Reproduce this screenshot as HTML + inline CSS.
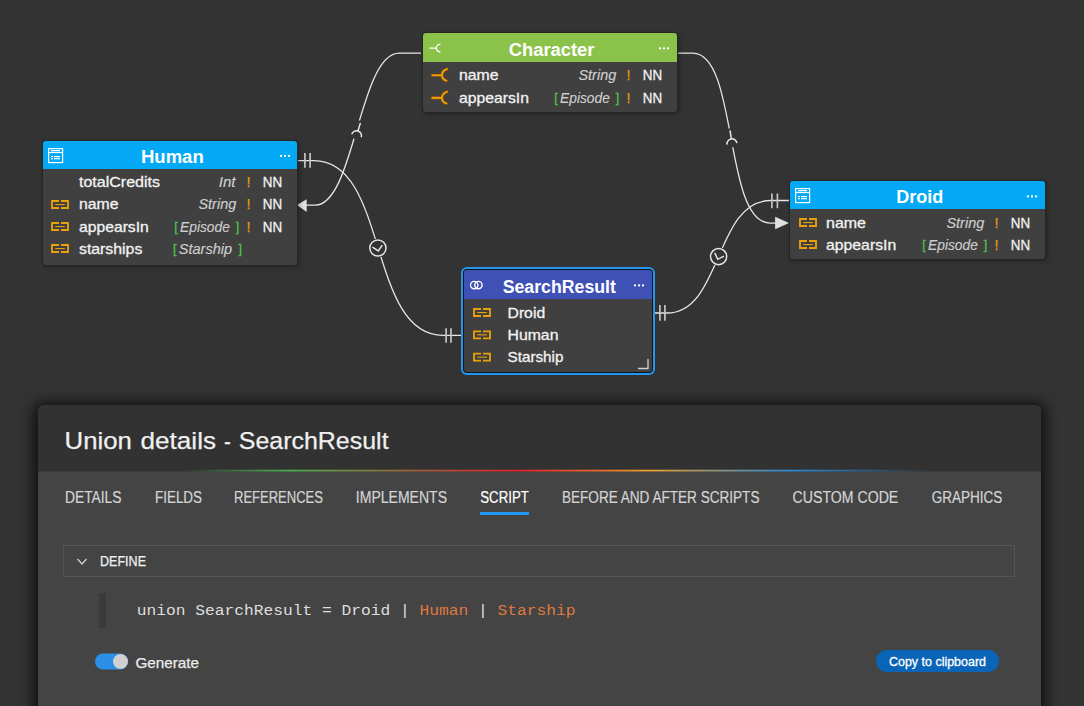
<!DOCTYPE html>
<html><head><meta charset="utf-8"><style>
html,body{margin:0;padding:0;background:#333333;width:1084px;height:706px;overflow:hidden}
svg{display:block;font-family:"Liberation Sans",sans-serif}
</style></head><body>
<svg width="1084" height="706" viewBox="0 0 1084 706">
<defs><filter id="bs" x="-10%" y="-10%" width="120%" height="130%"><feGaussianBlur stdDeviation="2.5"/></filter></defs>
<rect width="1084" height="706" fill="#333333"/>
<path d="M421 53.2H399.2C359.1 53.2 354.4 205.1 315.2 205.1H306" fill="none" stroke="#e6e6e6" stroke-width="1.3"/><path d="M678 53.1H692.8C738.3 53.1 723.5 223.1 770.2 223.1H776" fill="none" stroke="#e6e6e6" stroke-width="1.3"/><path d="M297 160.6H314C388.5 160.6 367.6 335.4 443 335.4H461" fill="none" stroke="#e6e6e6" stroke-width="1.3"/><path d="M655 313H667C721.9 313 714.9 200.5 770.6 200.5H790" fill="none" stroke="#e6e6e6" stroke-width="1.3"/><path d="M297 205.1L306.7 199.2V212.1Z" fill="#e0e0e0"/><path d="M789 223.1L775.1 216.8V229.3Z" fill="#e0e0e0"/><path d="M304.9 152.9V167.7M310.1 152.9V167.7" stroke="#c4c4c4" stroke-width="1.7"/><path d="M446.1 328.2V342.8M451 328.2V342.8" stroke="#c4c4c4" stroke-width="1.7"/><path d="M659.9 305V320.8M664.9 305V320.8" stroke="#c4c4c4" stroke-width="1.7"/><path d="M771.9 193.4V208.2M777.4 193.4V208.2" stroke="#c4c4c4" stroke-width="1.7"/><circle cx="377.9" cy="248" r="9.5" fill="#333333"/><circle cx="377.9" cy="248" r="8.1" fill="#333333" stroke="#e6e6e6" stroke-width="1.5"/><path d="M372.4 247.2L378.3 251L382.2 245.1" fill="none" stroke="#e6e6e6" stroke-width="1.5"/><circle cx="718.6" cy="256.6" r="9.5" fill="#333333"/><circle cx="718.6" cy="256.6" r="8.1" fill="#333333" stroke="#e6e6e6" stroke-width="1.5"/><path d="M714.8 252.9L717.7 259.3L724 256.2" fill="none" stroke="#e6e6e6" stroke-width="1.5"/><g transform="translate(358.1 130.5) rotate(17)"><rect x="-7" y="-10" width="14" height="19" fill="#333333"/><path d="M0 -8V0M-5 5.5A5 5 0 0 1 5 5.5" fill="none" stroke="#e6e6e6" stroke-width="1.5"/></g><g transform="translate(731.2 138.4) rotate(-8)"><rect x="-7" y="-10" width="14" height="19" fill="#333333"/><path d="M0 -8V0M-5 5.5A5 5 0 0 1 5 5.5" fill="none" stroke="#e6e6e6" stroke-width="1.5"/></g><rect x="424" y="34" width="255" height="80" rx="4" fill="#000" opacity="0.35" filter="url(#bs)"/><rect x="422" y="32" width="256" height="81" rx="4" fill="#262626"/><rect x="423" y="33" width="254" height="79" rx="3" fill="#404040"/><path d="M423 62V36Q423 33 426 33H674Q677 33 677 36V62Z" fill="#8bc34a"/><g fill="none" stroke="#ffffff" stroke-width="1.3" stroke-linecap="round"><path d="M429.8 48.1H436"/><path d="M440 44.4A3.7 3.7 0 0 0 440 51.800000000000004"/></g><circle cx="660" cy="48.4" r="1.15" fill="#ffffff"/><circle cx="664" cy="48.4" r="1.15" fill="#ffffff"/><circle cx="668" cy="48.4" r="1.15" fill="#ffffff"/><path d="M432.3 75.2H441.8M447.1 69.10000000000001C443.8 70.2 442 72.60000000000001 442 75.2C442 77.7 443.5 79.8 446.4 80.7" fill="none" stroke="#c86800" stroke-width="2.6" stroke-linecap="round"/><path d="M432.3 75.2H441.8M447.1 69.10000000000001C443.8 70.2 442 72.60000000000001 442 75.2C442 77.7 443.5 79.8 446.4 80.7" fill="none" stroke="#f2b600" stroke-width="1.1" stroke-linecap="round"/><path d="M432.3 97.9H441.8M447.1 91.80000000000001C443.8 92.9 442 95.30000000000001 442 97.9C442 100.4 443.5 102.5 446.4 103.4" fill="none" stroke="#c86800" stroke-width="2.6" stroke-linecap="round"/><path d="M432.3 97.9H441.8M447.1 91.80000000000001C443.8 92.9 442 95.30000000000001 442 97.9C442 100.4 443.5 102.5 446.4 103.4" fill="none" stroke="#f2b600" stroke-width="1.1" stroke-linecap="round"/><rect x="44" y="142" width="255" height="125" rx="4" fill="#000" opacity="0.35" filter="url(#bs)"/><rect x="42" y="140" width="256" height="126" rx="4" fill="#262626"/><rect x="43" y="141" width="254" height="124" rx="3" fill="#404040"/><path d="M43 169V144Q43 141 46 141H294Q297 141 297 144V169Z" fill="#03a9f4"/><g fill="none" stroke="#ffffff" stroke-width="1.2"><rect x="48.6" y="148.6" width="14" height="14"/><path d="M48.6 152.5H62.6"/></g><g fill="#ffffff"><rect x="51" y="150" width="9" height="1.2"/><rect x="51" y="156" width="2" height="1.2"/><rect x="54" y="156" width="6" height="1.2"/><rect x="51" y="158.1" width="2" height="1.2"/><rect x="54" y="158.1" width="6" height="1.2"/></g><circle cx="281" cy="155.9" r="1.15" fill="#ffffff"/><circle cx="285" cy="155.9" r="1.15" fill="#ffffff"/><circle cx="289" cy="155.9" r="1.15" fill="#ffffff"/><g fill="none" stroke="#eaa00a" stroke-width="1.85"><path d="M59 201H52V208H59"/><path d="M61 201H68V208H61"/></g><rect x="55.2" y="204" width="9.6" height="1.1" fill="#eaa00a"/><g fill="none" stroke="#eaa00a" stroke-width="1.85"><path d="M59 223H52V230H59"/><path d="M61 223H68V230H61"/></g><rect x="55.2" y="226" width="9.6" height="1.1" fill="#eaa00a"/><g fill="none" stroke="#eaa00a" stroke-width="1.85"><path d="M59 245H52V252H59"/><path d="M61 245H68V252H61"/></g><rect x="55.2" y="248" width="9.6" height="1.1" fill="#eaa00a"/><rect x="791" y="182" width="256" height="79" rx="4" fill="#000" opacity="0.35" filter="url(#bs)"/><rect x="789" y="180" width="257" height="80" rx="4" fill="#262626"/><rect x="790" y="181" width="255" height="78" rx="3" fill="#404040"/><path d="M790 209V184Q790 181 793 181H1042Q1045 181 1045 184V209Z" fill="#03a9f4"/><g fill="none" stroke="#ffffff" stroke-width="1.2"><rect x="795.6" y="188.6" width="14" height="14"/><path d="M795.6 192.5H809.6"/></g><g fill="#ffffff"><rect x="798" y="190" width="9" height="1.2"/><rect x="798" y="196" width="2" height="1.2"/><rect x="801" y="196" width="6" height="1.2"/><rect x="798" y="198.1" width="2" height="1.2"/><rect x="801" y="198.1" width="6" height="1.2"/></g><circle cx="1028" cy="196.4" r="1.15" fill="#ffffff"/><circle cx="1032" cy="196.4" r="1.15" fill="#ffffff"/><circle cx="1036" cy="196.4" r="1.15" fill="#ffffff"/><g fill="none" stroke="#eaa00a" stroke-width="1.85"><path d="M807 219H800V226H807"/><path d="M809 219H816V226H809"/></g><rect x="803.2" y="222" width="9.6" height="1.1" fill="#eaa00a"/><g fill="none" stroke="#eaa00a" stroke-width="1.85"><path d="M807 241H800V248H807"/><path d="M809 241H816V248H809"/></g><rect x="803.2" y="244" width="9.6" height="1.1" fill="#eaa00a"/><rect x="461" y="267" width="194" height="108" rx="6" fill="#2196f3"/><rect x="463" y="269" width="190" height="104" rx="4" fill="#141414"/><rect x="464" y="270" width="188" height="102" rx="3" fill="#404040"/><path d="M464 299V273Q464 270 467 270H649Q652 270 652 273V299Z" fill="#3f51b5"/><g fill="none" stroke="#ffffff" stroke-width="1.4"><circle cx="474.2" cy="285.1" r="3.7"/><circle cx="478.4" cy="285.1" r="3.7"/></g><circle cx="635" cy="285.4" r="1.15" fill="#ffffff"/><circle cx="639" cy="285.4" r="1.15" fill="#ffffff"/><circle cx="643" cy="285.4" r="1.15" fill="#ffffff"/><g fill="none" stroke="#eaa00a" stroke-width="1.85"><path d="M481 309.0H474V316.0H481"/><path d="M483 309.0H490V316.0H483"/></g><rect x="477.2" y="312.0" width="9.6" height="1.1" fill="#eaa00a"/><g fill="none" stroke="#eaa00a" stroke-width="1.85"><path d="M481 331.3H474V338.3H481"/><path d="M483 331.3H490V338.3H483"/></g><rect x="477.2" y="334.3" width="9.6" height="1.1" fill="#eaa00a"/><g fill="none" stroke="#eaa00a" stroke-width="1.85"><path d="M481 353.6H474V360.6H481"/><path d="M483 353.6H490V360.6H483"/></g><rect x="477.2" y="356.6" width="9.6" height="1.1" fill="#eaa00a"/><path d="M638 368.5H648V359" fill="none" stroke="#cfcfcf" stroke-width="1.3"/>
<text x="508.80" y="55.7" font-size="18" fill="#ffffff" font-weight="bold" font-style="normal" font-family="Liberation Sans" textLength="85.64" lengthAdjust="spacingAndGlyphs">Character</text><text x="141.00" y="162.7" font-size="18" fill="#ffffff" font-weight="bold" font-style="normal" font-family="Liberation Sans" textLength="62.70" lengthAdjust="spacingAndGlyphs">Human</text><text x="896.20" y="202.7" font-size="18" fill="#ffffff" font-weight="bold" font-style="normal" font-family="Liberation Sans" textLength="47.00" lengthAdjust="spacingAndGlyphs">Droid</text><text x="502.70" y="292.8" font-size="18" fill="#ffffff" font-weight="bold" font-style="normal" font-family="Liberation Sans" textLength="113.25" lengthAdjust="spacingAndGlyphs">SearchResult</text><text x="459.00" y="80" font-size="14.5" fill="#f2f2f2" font-weight="normal" font-style="normal" font-family="Liberation Sans" textLength="39.57" lengthAdjust="spacingAndGlyphs" stroke="#f2f2f2" stroke-width="0.3">name</text><text x="578.50" y="80" font-size="14.5" fill="#cfcfcf" font-weight="normal" font-style="italic" font-family="Liberation Sans" textLength="37.68" lengthAdjust="spacingAndGlyphs" stroke="#cfcfcf" stroke-width="0.15">String</text><text x="626.40" y="80" font-size="14.5" fill="#e39a16" font-weight="normal" font-style="normal" font-family="Liberation Sans" stroke="#e39a16" stroke-width="0.25">!</text><text x="642.80" y="80" font-size="14.5" fill="#f2f2f2" font-weight="normal" font-style="normal" font-family="Liberation Sans" textLength="19.34" lengthAdjust="spacingAndGlyphs" stroke="#f2f2f2" stroke-width="0.3">NN</text><text x="459.00" y="102.5" font-size="14.5" fill="#f2f2f2" font-weight="normal" font-style="normal" font-family="Liberation Sans" textLength="69.99" lengthAdjust="spacingAndGlyphs" stroke="#f2f2f2" stroke-width="0.3">appearsIn</text><text x="615.80" y="102.2" font-size="12.5" fill="#4cc34c" font-weight="normal" font-style="normal" font-family="Liberation Sans" stroke="#4cc34c" stroke-width="0.3">]</text><text x="560.10" y="102.5" font-size="14.5" fill="#cfcfcf" font-weight="normal" font-style="italic" font-family="Liberation Sans" textLength="49.70" lengthAdjust="spacingAndGlyphs" stroke="#cfcfcf" stroke-width="0.15">Episode</text><text x="554.30" y="102.2" font-size="12.5" fill="#4cc34c" font-weight="normal" font-style="normal" font-family="Liberation Sans" stroke="#4cc34c" stroke-width="0.3">[</text><text x="626.40" y="102.5" font-size="14.5" fill="#e39a16" font-weight="normal" font-style="normal" font-family="Liberation Sans" stroke="#e39a16" stroke-width="0.25">!</text><text x="642.80" y="102.5" font-size="14.5" fill="#f2f2f2" font-weight="normal" font-style="normal" font-family="Liberation Sans" textLength="19.34" lengthAdjust="spacingAndGlyphs" stroke="#f2f2f2" stroke-width="0.3">NN</text><text x="79.00" y="187" font-size="14.5" fill="#f2f2f2" font-weight="normal" font-style="normal" font-family="Liberation Sans" textLength="81.04" lengthAdjust="spacingAndGlyphs" stroke="#f2f2f2" stroke-width="0.3">totalCredits</text><text x="218.70" y="187" font-size="14.5" fill="#cfcfcf" font-weight="normal" font-style="italic" font-family="Liberation Sans" textLength="16.89" lengthAdjust="spacingAndGlyphs" stroke="#cfcfcf" stroke-width="0.15">Int</text><text x="246.40" y="187" font-size="14.5" fill="#e39a16" font-weight="normal" font-style="normal" font-family="Liberation Sans" stroke="#e39a16" stroke-width="0.25">!</text><text x="262.80" y="187" font-size="14.5" fill="#f2f2f2" font-weight="normal" font-style="normal" font-family="Liberation Sans" textLength="19.34" lengthAdjust="spacingAndGlyphs" stroke="#f2f2f2" stroke-width="0.3">NN</text><text x="79.00" y="209" font-size="14.5" fill="#f2f2f2" font-weight="normal" font-style="normal" font-family="Liberation Sans" textLength="39.47" lengthAdjust="spacingAndGlyphs" stroke="#f2f2f2" stroke-width="0.3">name</text><text x="198.50" y="209" font-size="14.5" fill="#cfcfcf" font-weight="normal" font-style="italic" font-family="Liberation Sans" textLength="37.68" lengthAdjust="spacingAndGlyphs" stroke="#cfcfcf" stroke-width="0.15">String</text><text x="246.40" y="209" font-size="14.5" fill="#e39a16" font-weight="normal" font-style="normal" font-family="Liberation Sans" stroke="#e39a16" stroke-width="0.25">!</text><text x="262.80" y="209" font-size="14.5" fill="#f2f2f2" font-weight="normal" font-style="normal" font-family="Liberation Sans" textLength="19.34" lengthAdjust="spacingAndGlyphs" stroke="#f2f2f2" stroke-width="0.3">NN</text><text x="79.00" y="231.5" font-size="14.5" fill="#f2f2f2" font-weight="normal" font-style="normal" font-family="Liberation Sans" textLength="69.79" lengthAdjust="spacingAndGlyphs" stroke="#f2f2f2" stroke-width="0.3">appearsIn</text><text x="235.80" y="231.2" font-size="12.5" fill="#4cc34c" font-weight="normal" font-style="normal" font-family="Liberation Sans" stroke="#4cc34c" stroke-width="0.3">]</text><text x="180.10" y="231.5" font-size="14.5" fill="#cfcfcf" font-weight="normal" font-style="italic" font-family="Liberation Sans" textLength="49.70" lengthAdjust="spacingAndGlyphs" stroke="#cfcfcf" stroke-width="0.15">Episode</text><text x="174.30" y="231.2" font-size="12.5" fill="#4cc34c" font-weight="normal" font-style="normal" font-family="Liberation Sans" stroke="#4cc34c" stroke-width="0.3">[</text><text x="246.40" y="231.5" font-size="14.5" fill="#e39a16" font-weight="normal" font-style="normal" font-family="Liberation Sans" stroke="#e39a16" stroke-width="0.25">!</text><text x="262.80" y="231.5" font-size="14.5" fill="#f2f2f2" font-weight="normal" font-style="normal" font-family="Liberation Sans" textLength="19.34" lengthAdjust="spacingAndGlyphs" stroke="#f2f2f2" stroke-width="0.3">NN</text><text x="79.00" y="253.5" font-size="14.5" fill="#f2f2f2" font-weight="normal" font-style="normal" font-family="Liberation Sans" textLength="63.32" lengthAdjust="spacingAndGlyphs" stroke="#f2f2f2" stroke-width="0.3">starships</text><text x="238.40" y="253.2" font-size="12.5" fill="#4cc34c" font-weight="normal" font-style="normal" font-family="Liberation Sans" stroke="#4cc34c" stroke-width="0.3">]</text><text x="178.80" y="253.5" font-size="14.5" fill="#cfcfcf" font-weight="normal" font-style="italic" font-family="Liberation Sans" textLength="53.19" lengthAdjust="spacingAndGlyphs" stroke="#cfcfcf" stroke-width="0.15">Starship</text><text x="173.00" y="253.2" font-size="12.5" fill="#4cc34c" font-weight="normal" font-style="normal" font-family="Liberation Sans" stroke="#4cc34c" stroke-width="0.3">[</text><text x="826.00" y="227.5" font-size="14.5" fill="#f2f2f2" font-weight="normal" font-style="normal" font-family="Liberation Sans" textLength="39.97" lengthAdjust="spacingAndGlyphs" stroke="#f2f2f2" stroke-width="0.3">name</text><text x="946.50" y="227.5" font-size="14.5" fill="#cfcfcf" font-weight="normal" font-style="italic" font-family="Liberation Sans" textLength="37.68" lengthAdjust="spacingAndGlyphs" stroke="#cfcfcf" stroke-width="0.15">String</text><text x="994.40" y="227.5" font-size="14.5" fill="#e39a16" font-weight="normal" font-style="normal" font-family="Liberation Sans" stroke="#e39a16" stroke-width="0.25">!</text><text x="1010.80" y="227.5" font-size="14.5" fill="#f2f2f2" font-weight="normal" font-style="normal" font-family="Liberation Sans" textLength="19.34" lengthAdjust="spacingAndGlyphs" stroke="#f2f2f2" stroke-width="0.3">NN</text><text x="826.00" y="249.5" font-size="14.5" fill="#f2f2f2" font-weight="normal" font-style="normal" font-family="Liberation Sans" textLength="70.19" lengthAdjust="spacingAndGlyphs" stroke="#f2f2f2" stroke-width="0.3">appearsIn</text><text x="983.80" y="249.2" font-size="12.5" fill="#4cc34c" font-weight="normal" font-style="normal" font-family="Liberation Sans" stroke="#4cc34c" stroke-width="0.3">]</text><text x="928.10" y="249.5" font-size="14.5" fill="#cfcfcf" font-weight="normal" font-style="italic" font-family="Liberation Sans" textLength="49.70" lengthAdjust="spacingAndGlyphs" stroke="#cfcfcf" stroke-width="0.15">Episode</text><text x="922.30" y="249.2" font-size="12.5" fill="#4cc34c" font-weight="normal" font-style="normal" font-family="Liberation Sans" stroke="#4cc34c" stroke-width="0.3">[</text><text x="994.40" y="249.5" font-size="14.5" fill="#e39a16" font-weight="normal" font-style="normal" font-family="Liberation Sans" stroke="#e39a16" stroke-width="0.25">!</text><text x="1010.80" y="249.5" font-size="14.5" fill="#f2f2f2" font-weight="normal" font-style="normal" font-family="Liberation Sans" textLength="19.34" lengthAdjust="spacingAndGlyphs" stroke="#f2f2f2" stroke-width="0.3">NN</text><text x="507.50" y="317.5" font-size="14.5" fill="#f2f2f2" font-weight="normal" font-style="normal" font-family="Liberation Sans" textLength="37.65" lengthAdjust="spacingAndGlyphs" stroke="#f2f2f2" stroke-width="0.3">Droid</text><text x="507.50" y="339.7" font-size="14.5" fill="#f2f2f2" font-weight="normal" font-style="normal" font-family="Liberation Sans" textLength="50.95" lengthAdjust="spacingAndGlyphs" stroke="#f2f2f2" stroke-width="0.3">Human</text><text x="507.50" y="362.3" font-size="14.5" fill="#f2f2f2" font-weight="normal" font-style="normal" font-family="Liberation Sans" textLength="55.99" lengthAdjust="spacingAndGlyphs" stroke="#f2f2f2" stroke-width="0.3">Starship</text>
<defs><filter id="sh" x="-10%" y="-20%" width="120%" height="150%"><feGaussianBlur stdDeviation="7"/></filter><linearGradient id="gl" x1="0" x2="1"><stop offset="0.145" stop-color="#4caf50" stop-opacity="0"/><stop offset="0.25" stop-color="#4caf50"/><stop offset="0.48" stop-color="#e0202a"/><stop offset="0.61" stop-color="#eaa030"/><stop offset="0.75" stop-color="#2a8ad8"/><stop offset="0.889" stop-color="#2a8ad8" stop-opacity="0"/></linearGradient></defs><rect x="34" y="403" width="1011" height="320" rx="8" fill="#000" opacity="0.75" filter="url(#sh)"/><path d="M38 706V411Q38 405 44 405H1035Q1041 405 1041 411V706Z" fill="#323232"/><rect x="38" y="471.5" width="1003" height="236" fill="#444444"/><rect x="38" y="469.7" width="1003" height="1.8" fill="url(#gl)"/><rect x="480" y="512" width="49" height="3" fill="#2196f3"/><rect x="63.5" y="545.5" width="951" height="31" fill="none" stroke="#555555" stroke-width="1"/><path d="M77.5 559L82 564L86.5 559" fill="none" stroke="#d0d0d0" stroke-width="1.3"/><rect x="99" y="593" width="7" height="35" fill="#3a3a3a"/><rect x="95" y="653.5" width="33" height="16" rx="8" fill="#2b8fe8"/><circle cx="120.5" cy="661.5" r="7.5" fill="#d0d0d0"/><rect x="876" y="650" width="123" height="22" rx="11" fill="#0a64b8"/>
<text x="64.60" y="448.8" font-size="24.5" fill="#f0f0f0" font-weight="normal" font-style="normal" font-family="Liberation Sans" textLength="67.31" lengthAdjust="spacingAndGlyphs" stroke="#f0f0f0" stroke-width="0.25">Union</text><text x="140.60" y="448.8" font-size="24.5" fill="#f0f0f0" font-weight="normal" font-style="normal" font-family="Liberation Sans" textLength="75.42" lengthAdjust="spacingAndGlyphs" stroke="#f0f0f0" stroke-width="0.25">details</text><text x="224.00" y="448.8" font-size="24.5" fill="#f0f0f0" font-weight="normal" font-style="normal" font-family="Liberation Sans" textLength="6.87" lengthAdjust="spacingAndGlyphs" stroke="#f0f0f0" stroke-width="0.25">-</text><text x="238.80" y="448.8" font-size="24.5" fill="#f0f0f0" font-weight="normal" font-style="normal" font-family="Liberation Sans" textLength="149.77" lengthAdjust="spacingAndGlyphs" stroke="#f0f0f0" stroke-width="0.25">SearchResult</text><text x="65.00" y="502.8" font-size="16" fill="#d4d4d4" font-weight="normal" font-style="normal" font-family="Liberation Sans" textLength="56.50" lengthAdjust="spacingAndGlyphs" stroke="#d4d4d4" stroke-width="0.2">DETAILS</text><text x="155.00" y="502.8" font-size="16" fill="#d4d4d4" font-weight="normal" font-style="normal" font-family="Liberation Sans" textLength="47.01" lengthAdjust="spacingAndGlyphs" stroke="#d4d4d4" stroke-width="0.2">FIELDS</text><text x="234.00" y="502.8" font-size="16" fill="#d4d4d4" font-weight="normal" font-style="normal" font-family="Liberation Sans" textLength="88.96" lengthAdjust="spacingAndGlyphs" stroke="#d4d4d4" stroke-width="0.2">REFERENCES</text><text x="355.80" y="502.8" font-size="16" fill="#d4d4d4" font-weight="normal" font-style="normal" font-family="Liberation Sans" textLength="91.21" lengthAdjust="spacingAndGlyphs" stroke="#d4d4d4" stroke-width="0.2">IMPLEMENTS</text><text x="480.30" y="502.8" font-size="16" fill="#ffffff" font-weight="normal" font-style="normal" font-family="Liberation Sans" textLength="48.48" lengthAdjust="spacingAndGlyphs" stroke="#ffffff" stroke-width="0.2">SCRIPT</text><text x="562.00" y="502.8" font-size="16" fill="#d4d4d4" font-weight="normal" font-style="normal" font-family="Liberation Sans" textLength="197.43" lengthAdjust="spacingAndGlyphs" stroke="#d4d4d4" stroke-width="0.2">BEFORE AND AFTER SCRIPTS</text><text x="792.60" y="502.8" font-size="16" fill="#d4d4d4" font-weight="normal" font-style="normal" font-family="Liberation Sans" textLength="105.71" lengthAdjust="spacingAndGlyphs" stroke="#d4d4d4" stroke-width="0.2">CUSTOM CODE</text><text x="931.80" y="502.8" font-size="16" fill="#d4d4d4" font-weight="normal" font-style="normal" font-family="Liberation Sans" textLength="70.57" lengthAdjust="spacingAndGlyphs" stroke="#d4d4d4" stroke-width="0.2">GRAPHICS</text><text x="100.00" y="566" font-size="14" fill="#f0f0f0" font-weight="normal" font-style="normal" font-family="Liberation Sans" textLength="46.03" lengthAdjust="spacingAndGlyphs" stroke="#f0f0f0" stroke-width="0.25">DEFINE</text><text x="136.70" y="614.6" font-size="14" fill="#dedede" font-family="Liberation Mono" xml:space="preserve" textLength="282.75" lengthAdjust="spacingAndGlyphs">union SearchResult = Droid | </text><text x="419.45" y="614.6" font-size="14" fill="#de7a3e" font-family="Liberation Mono" xml:space="preserve" textLength="48.75" lengthAdjust="spacingAndGlyphs">Human</text><text x="468.20" y="614.6" font-size="14" fill="#dedede" font-family="Liberation Mono" xml:space="preserve" textLength="29.25" lengthAdjust="spacingAndGlyphs"> | </text><text x="497.45" y="614.6" font-size="14" fill="#de7a3e" font-family="Liberation Mono" xml:space="preserve" textLength="78.00" lengthAdjust="spacingAndGlyphs">Starship</text><text x="135.40" y="667.8" font-size="15" fill="#ececec" font-weight="normal" font-style="normal" font-family="Liberation Sans" textLength="63.64" lengthAdjust="spacingAndGlyphs" stroke="#ececec" stroke-width="0.25">Generate</text><text x="889.00" y="665.6" font-size="13" fill="#ffffff" font-weight="normal" font-style="normal" font-family="Liberation Sans" textLength="96.97" lengthAdjust="spacingAndGlyphs" stroke="#ffffff" stroke-width="0.3">Copy to clipboard</text>
</svg>
</body></html>
